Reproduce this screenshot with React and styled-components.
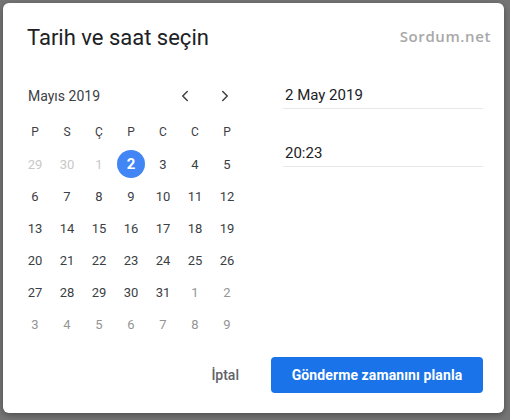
import React from "react";
import styled, { createGlobalStyle } from "styled-components";
import { ChevronLeft, ChevronRight } from "lucide-react";

const Global = createGlobalStyle`
  html, body { margin: 0; padding: 0; background: #757575; }
  body { font-family: Roboto, "Noto Sans", Arial, sans-serif; }
  * { box-sizing: border-box; }
`;

const Page = styled.div`
  width: 510px;
  height: 420px;
  padding: 3px 0 0 3px;
  background: #757575;
`;

const Dialog = styled.div`
  position: relative;
  width: 501px;
  height: 410px;
  background: #fff;
  border-radius: 6px;
  box-shadow: 0 2px 6px rgba(0, 0, 0, 0.35);
  padding: 21px 21px 20px 16px;
  display: flex;
  flex-direction: column;
`;

const Title = styled.h1`
  margin: 0 0 0 8px;
  font-family: Roboto, Arial, sans-serif;
  font-size: 22px;
  line-height: 28px;
  font-weight: 400;
  color: #202124;
`;

const Watermark = styled.div`
  position: absolute;
  top: 23px;
  right: 13px;
  font-family: "Open Sans", Verdana, sans-serif;
  font-size: 15px;
  font-weight: 600;
  line-height: 20px;
  color: #a8a8a8;
  letter-spacing: 0.6px;
`;

const Body = styled.div`
  margin-top: 28px;
  display: flex;
  gap: 40px;
`;

const Calendar = styled.div`
  width: 224px;
  display: flex;
  flex-direction: column;
`;

const MonthBar = styled.div`
  height: 32px;
  display: flex;
  align-items: center;
  padding: 0 2px 0 9px;
`;

const MonthLabel = styled.div`
  flex: 1;
  font-size: 14px;
  color: #3c4043;
`;

const NavButton = styled.button`
  width: 32px;
  height: 32px;
  border: none;
  background: none;
  padding: 0;
  display: flex;
  align-items: center;
  justify-content: center;
  color: #3c4043;
  cursor: pointer;
  & + & { margin-left: 8px; }
`;

const Grid = styled.div`
  display: grid;
  grid-template-columns: repeat(7, 32px);
  grid-auto-rows: 32px;
`;

const WeekHeader = styled(Grid)`
  margin-top: 4px;
`;

const DayName = styled.div`
  display: flex;
  align-items: center;
  justify-content: center;
  font-size: 12px;
  font-weight: 400;
  color: #3c4043;
`;

const Day = styled.div`
  display: flex;
  align-items: center;
  justify-content: center;
  font-size: 13px;
  color: ${(p) =>
    p.$selected ? "#fff" : p.$tone === "prev" ? "#c8c8c8" : p.$tone === "next" ? "#959595" : "#3c4043"};
  font-weight: ${(p) => (p.$selected ? 700 : 400)};
`;

const Selected = styled.span`
  width: 28px;
  height: 28px;
  border-radius: 50%;
  background: #4285f4;
  display: flex;
  align-items: center;
  justify-content: center;
  font-size: 15px;
`;

const Fields = styled.div`
  width: 200px;
  display: flex;
  flex-direction: column;
`;

const Field = styled.div`
  height: 29px;
  padding: 5px 2px 0;
  line-height: 20px;
  font-size: 15px;
  color: #202124;
  border-bottom: 1px solid #e8e8e8;
  & + & { margin-top: 29px; }
`;

const Footer = styled.div`
  margin-top: 17px;
  display: flex;
  justify-content: flex-end;
  align-items: center;
  gap: 16px;
`;

const TextButton = styled.button`
  height: 36px;
  padding: 0 16px;
  border: none;
  background: none;
  font-family: Roboto, Arial, sans-serif;
  font-size: 14px;
  font-weight: 500;
  color: #5f6368;
  cursor: pointer;
`;

const PrimaryButton = styled.button`
  width: 212px;
  height: 36px;
  border: none;
  border-radius: 4px;
  background: #1a73e8;
  color: #fff;
  font-family: Roboto, Arial, sans-serif;
  font-size: 14px;
  font-weight: 700;
  letter-spacing: 0.1px;
  cursor: pointer;
`;

const dayNames = ["P", "S", "Ç", "P", "C", "C", "P"];

const days = [
  ...[29, 30, 1].map((d) => ({ d, tone: "prev" })),
  ...Array.from({ length: 30 }, (_, i) => ({ d: i + 2, tone: "cur" })),
  ...[1, 2, 3, 4, 5, 6, 7, 8, 9].map((d) => ({ d, tone: "next" })),
];

export default function App() {
  return (
    <>
      <Global />
      <Page>
        <Dialog>
          <Title>Tarih ve saat seçin</Title>
          <Watermark>Sordum.net</Watermark>
          <Body>
            <Calendar>
              <MonthBar>
                <MonthLabel>Mayıs 2019</MonthLabel>
                <NavButton aria-label="Önceki ay">
                  <ChevronLeft size={18} strokeWidth={2} />
                </NavButton>
                <NavButton aria-label="Sonraki ay">
                  <ChevronRight size={18} strokeWidth={2} />
                </NavButton>
              </MonthBar>
              <WeekHeader>
                {dayNames.map((n, i) => (
                  <DayName key={i}>{n}</DayName>
                ))}
              </WeekHeader>
              <Grid>
                {days.map((x, i) => {
                  const sel = x.tone === "cur" && x.d === 2;
                  return (
                    <Day key={i} $tone={x.tone} $selected={sel}>
                      {sel ? <Selected>{x.d}</Selected> : x.d}
                    </Day>
                  );
                })}
              </Grid>
            </Calendar>
            <Fields>
              <Field>2 May 2019</Field>
              <Field>20:23</Field>
            </Fields>
          </Body>
          <Footer>
            <TextButton>İptal</TextButton>
            <PrimaryButton>Gönderme zamanını planla</PrimaryButton>
          </Footer>
        </Dialog>
      </Page>
    </>
  );
}
